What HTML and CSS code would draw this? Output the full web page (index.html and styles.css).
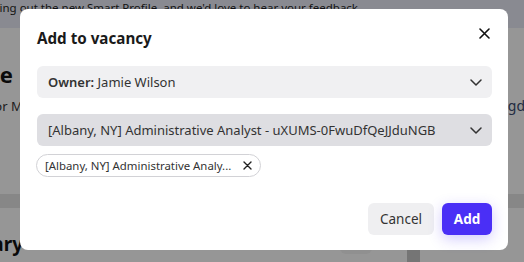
FILE: index.html
```html
<!DOCTYPE html>
<html>
<head>
<meta charset="utf-8">
<link rel="stylesheet" href="styles.css">
</head>
<body>
<div class="page">
  <div class="banner"><span>Thanks for trying out the new Smart Profile, and we'd love to hear your feedback</span></div>
  <div class="page-body">
    <div class="clip clip-title"><span>Profile</span></div>
    <div class="page-row">
      <div class="clip clip-sub"><span>Senior Ma</span></div>
      <span class="page-tag">gd</span>
    </div>
    <div class="page-band"></div>
    <div class="page-bottom">
      <div class="clip clip-h2"><span>Summary</span></div>
      <div class="ghost-btn"></div>
      <div class="ghost-strip"></div>
    </div>
  </div>
</div>
<div class="overlay">
  <div class="modal">
    <div class="modal-head">
      <h2 class="modal-title">Add to vacancy</h2>
      <button class="icon-btn close" aria-label="Close">
        <svg width="11" height="11" viewBox="0 0 11 11"><path d="M1 1L10 10M10 1L1 10" stroke="#111" stroke-width="1.6" stroke-linecap="round"/></svg>
      </button>
    </div>
    <div class="select">
      <span class="select-text"><b>Owner:</b> Jamie Wilson</span>
      <svg class="chev" width="12" height="7" viewBox="0 0 12 7"><path d="M1 1L6 6L11 1" fill="none" stroke="#333" stroke-width="1.5" stroke-linecap="round" stroke-linejoin="round"/></svg>
    </div>
    <div class="select select-active">
      <span class="select-text">[Albany, NY] Administrative Analyst - uXUMS-0FwuDfQeJJduNGB</span>
      <svg class="chev" width="12" height="7" viewBox="0 0 12 7"><path d="M1 1L6 6L11 1" fill="none" stroke="#333" stroke-width="1.5" stroke-linecap="round" stroke-linejoin="round"/></svg>
    </div>
    <div class="chips">
      <span class="chip">
        <span class="chip-text">[Albany, NY] Administrative Analy...</span>
        <svg width="9" height="9" viewBox="0 0 9 9"><path d="M1 1L8 8M8 1L1 8" stroke="#222" stroke-width="1.4" stroke-linecap="round"/></svg>
      </span>
    </div>
    <div class="actions">
      <button class="btn btn-cancel">Cancel</button>
      <button class="btn btn-add">Add</button>
    </div>
  </div>
</div>
</body>
</html>
```
FILE: styles.css
```css
* { box-sizing: border-box; }
html, body { margin: 0; padding: 0; }
body {
  width: 524px;
  height: 262px;
  overflow: hidden;
  position: relative;
  font-family: "Noto Sans", "Open Sans", sans-serif;
  background: #fff;
}
.page { width: 524px; height: 262px; overflow: hidden; background: #fafafa; }
.banner {
  height: 28px;
  background: #e4e6f2;
  color: #1f1f24;
  font-size: 11.5px;
  line-height: 15px;
  white-space: nowrap;
  display: flex;
  justify-content: flex-end;
  padding-right: 166px;
  padding-top: 0;
}
.banner span { flex: none; }
.page-body { display: flex; flex-direction: column; }
.clip {
  display: flex;
  justify-content: flex-end;
  white-space: nowrap;
  overflow: visible;
}
.clip span { flex: none; }
.clip-title {
  width: 13px;
  font-size: 22px;
  font-weight: 700;
  color: #111;
  margin-top: 32px;
  line-height: 28px;
}
.page-row { display: flex; justify-content: space-between; align-items: center; margin-top: 9px; font-size: 13px; line-height: 18px; }
.clip-sub { width: 30px; color: #333; }
.page-tag { color: #3a4a6e; margin-right: -1px; font-size: 14px; }
.page-band { height: 14px; background: #e2e2e2; margin-top: 79px; }
.page-bottom { display: flex; align-items: flex-start; margin-top: 24px; height: 40px; }
.clip-h2 { width: 23px; font-size: 19px; font-weight: 700; color: #111; line-height: 24px; }
.ghost-btn { width: 32px; height: 22px; margin-left: 317px; margin-top: 0; border-radius: 6px; background: #f0f0f0; }
.ghost-strip { width: 13px; height: 40px; margin-left: 35px; background: #c4c4c4; }

.overlay {
  position: absolute;
  inset: 0;
  background: rgba(0, 0, 0, 0.4);
}
.modal {
  position: absolute;
  left: 20px;
  top: 9px;
  width: 488px;
  height: 241px;
  background: #fff;
  border-radius: 8px;
  padding: 18px 16px 15px 17px;
  display: flex;
  flex-direction: column;
  color: #333;
}
.modal-head {
  display: flex;
  justify-content: space-between;
  align-items: flex-start;
  height: 39px;
}
.modal-title {
  margin: 0;
  font-size: 15.2px;
  font-weight: 700;
  line-height: 22px;
  color: #1a1a1a;
}
.icon-btn {
  border: 0;
  background: none;
  padding: 0;
  margin: -2px 0 0 0;
  width: 16px;
  height: 16px;
  display: flex;
  align-items: center;
  justify-content: center;
}
.select {
  height: 32px;
  border-radius: 6px;
  background: #f0f0f2;
  display: flex;
  align-items: center;
  justify-content: space-between;
  padding: 0 10px 0 11px;
  font-size: 13px;
  color: #333;
}
.select b { font-weight: 600; }
.select + .select { margin-top: 16px; }
.select-active { background: #dedee2; }
.select-text { white-space: nowrap; overflow: hidden; }
.chev { flex: none; }
.chips { display: flex; margin-top: 8px; margin-left: -1px; }
.chip {
  height: 23px;
  border: 1px solid #d2d2d6;
  border-radius: 12px;
  display: inline-flex;
  align-items: center;
  gap: 12px;
  padding: 0 8px 0 8px;
  font-size: 11.4px;
  color: #333;
}
.actions {
  margin-top: auto;
  display: flex;
  justify-content: flex-end;
  gap: 8px;
}
.btn {
  height: 32px;
  border: 0;
  border-radius: 6px;
  font-family: inherit;
  font-size: 13.5px;
  padding: 0;
}
.btn-cancel { background: #efeff1; color: #333; width: 66px; }
.btn-add {
  background: #4a2ff6;
  color: #fff;
  font-weight: 700;
  width: 50px;
  box-shadow: 0 4px 14px rgba(74, 47, 246, 0.25);
}
```
